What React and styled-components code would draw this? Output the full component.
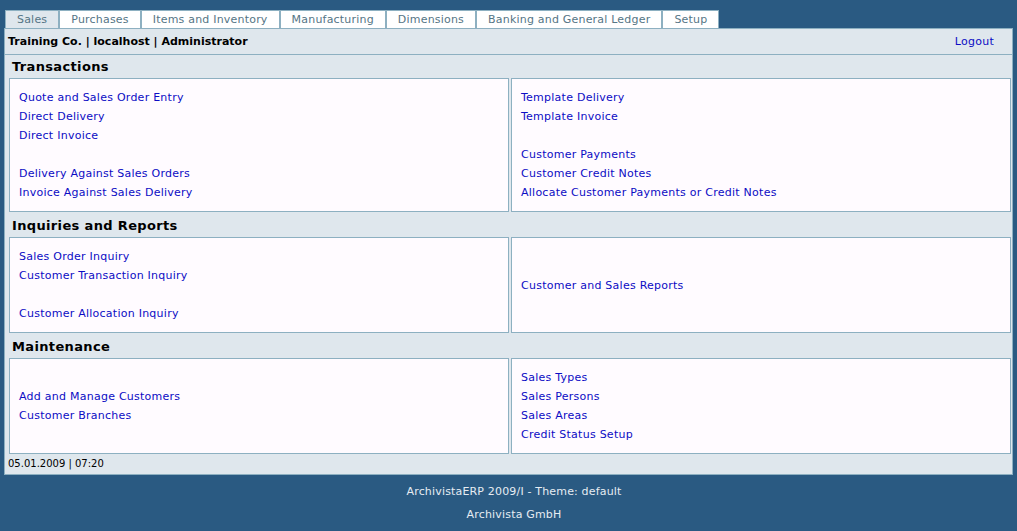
import React from "react"
import styled, { createGlobalStyle } from "styled-components"

const tabs = [
  "Sales",
  "Purchases",
  "Items and Inventory",
  "Manufacturing",
  "Dimensions",
  "Banking and General Ledger",
  "Setup",
]

// null = blank line between link groups
const sections = [
  {
    title: "Transactions",
    left: [
      "Quote and Sales Order Entry",
      "Direct Delivery",
      "Direct Invoice",
      null,
      "Delivery Against Sales Orders",
      "Invoice Against Sales Delivery",
    ],
    right: [
      "Template Delivery",
      "Template Invoice",
      null,
      "Customer Payments",
      "Customer Credit Notes",
      "Allocate Customer Payments or Credit Notes",
    ],
  },
  {
    title: "Inquiries and Reports",
    left: [
      "Sales Order Inquiry",
      "Customer Transaction Inquiry",
      null,
      "Customer Allocation Inquiry",
    ],
    right: ["Customer and Sales Reports"],
  },
  {
    title: "Maintenance",
    left: ["Add and Manage Customers", "Customer Branches"],
    right: ["Sales Types", "Sales Persons", "Sales Areas", "Credit Status Setup"],
  },
]

function LinkBox({ items }) {
  return (
    <Box>
      {items.map((item, i) =>
        item ? <MenuLink key={i} href="#">{item}</MenuLink> : <Blank key={i} />
      )}
    </Box>
  )
}

function App() {
  return (
    <>
      <GlobalStyle />
      <Page>
        <TabBar>
          {tabs.map((t, i) => (
            <Tab key={t} $active={i === 0}>{t}</Tab>
          ))}
        </TabBar>
        <Panel>
          <TopBar>
            <UserInfo>Training Co. | localhost | Administrator</UserInfo>
            <MenuLink href="#">Logout</MenuLink>
          </TopBar>
          {sections.map(s => (
            <Section key={s.title}>
              <SectionTitle>{s.title}</SectionTitle>
              <BoxRow>
                <LinkBox items={s.left} />
                <LinkBox items={s.right} />
              </BoxRow>
            </Section>
          ))}
          <DateLine>05.01.2009 | 07:20</DateLine>
        </Panel>
        <Footer>
          <FooterLine>ArchivistaERP 2009/I - Theme: default</FooterLine>
          <FooterLine>Archivista GmbH</FooterLine>
        </Footer>
      </Page>
    </>
  )
}

export default App

const GlobalStyle = createGlobalStyle`
  html, body {
    margin: 0;
    background: #2a5a82;
    font-family: "DejaVu Sans", Verdana, sans-serif;
    font-size: 11px;
  }
`
const Page = styled.div`
  padding: 10px 4px 0 4px;
  width: 1009px;
`
const TabBar = styled.div`
  display: flex;
  margin-left: 1px;
`
const Tab = styled.div`
  height: 17px;
  line-height: 17px;
  padding: 0 11px;
  border: 1px solid #8db0c1;
  border-bottom: none;
  background: ${p => (p.$active ? "#dfe7ed" : "#ffffff")};
  color: #557585;
  font-size: 11px;
  letter-spacing: 0.2px;
  white-space: nowrap;
`
const Panel = styled.div`
  background: #dfe7ed;
  border: 1px solid #8db0c1;
  border-top: none;
`
const TopBar = styled.div`
  display: flex;
  justify-content: space-between;
  align-items: center;
  height: 25px;
  padding: 0 18px 0 3px;
  border-top: 1px solid #8db0c1;
  border-bottom: 1px solid #8db0c1;
`
const UserInfo = styled.span`
  font-weight: bold;
  color: #000;
`
const Section = styled.div`
  padding: 0 1px 0 4px;
  & + & {
    margin-top: 2px;
  }
`
const SectionTitle = styled.div`
  height: 23px;
  line-height: 23px;
  padding-left: 3px;
  font-size: 13px;
  font-weight: bold;
  letter-spacing: 0.35px;
  color: #000;
`
const Box = styled.div`
  display: flex;
  flex-direction: column;
  justify-content: center;
  padding: 9px;
  background: #fffbff;
  border: 1px solid #8db0c1;
`
const BoxRow = styled.div`
  display: grid;
  grid-template-columns: 1fr 1fr;
  gap: 2px;
`
const MenuLink = styled.a`
  display: block;
  line-height: 19px;
  color: #0c0cc4;
  letter-spacing: 0.25px;
  text-decoration: none;
`
const Blank = styled.div`
  height: 19px;
`
const DateLine = styled.div`
  height: 20px;
  line-height: 20px;
  padding-left: 3px;
  font-size: 10px;
  color: #000;
`
const Footer = styled.div`
  padding: 5px 0 0 11px;
  text-align: center;
  color: #e6ecf2;
  letter-spacing: 0.17px;
`
const FooterLine = styled.div`
  line-height: 23px;
`
